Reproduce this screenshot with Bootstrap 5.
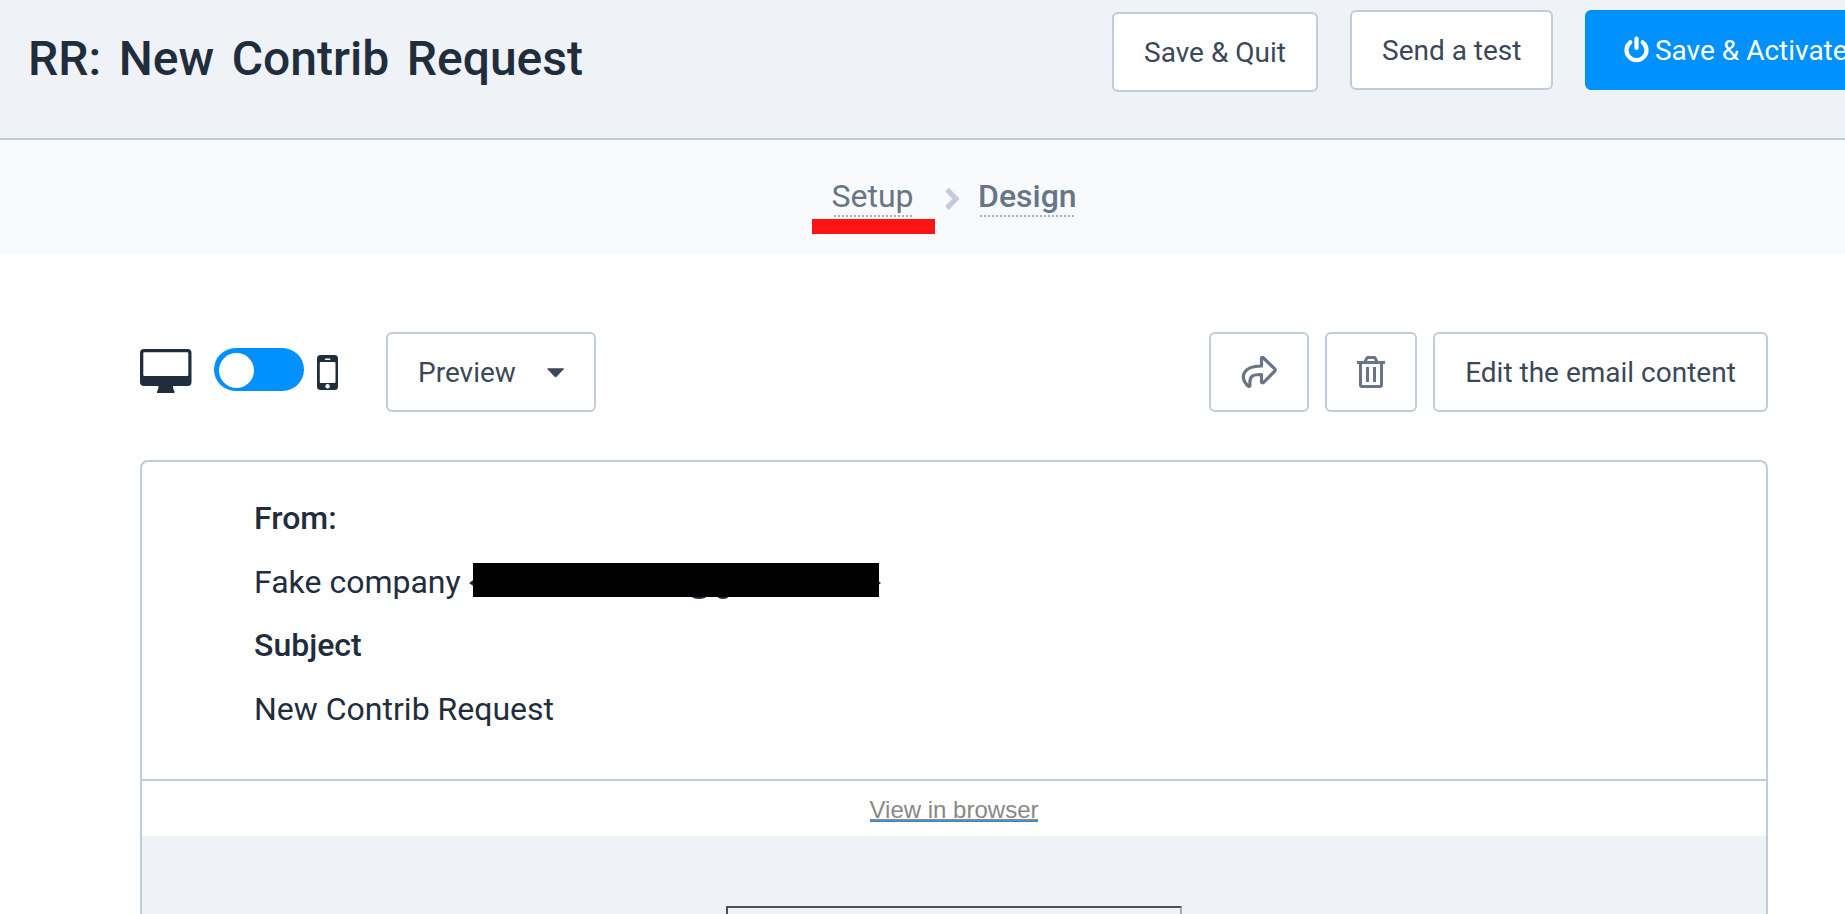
<!DOCTYPE html>
<html lang="en">
<head>
<meta charset="utf-8">
<title>RR: New Contrib Request</title>
<link href="https://cdn.jsdelivr.net/npm/bootstrap@5.3.0/dist/css/bootstrap.min.css" rel="stylesheet">
<style>
body{font-family:Roboto,"Liberation Sans",sans-serif;font-size:32px;color:#1f2d3d;height:914px;overflow:hidden;background:#fff}
.topbar{height:140px;background:#eff2f7;border-bottom:2px solid #c0ccda;overflow:hidden}
.topbar h1{font-size:48px;font-weight:500;line-height:56px;margin:31px 0 0 28px;word-spacing:5.7px;white-space:nowrap}
.top-actions{gap:32px;margin:10px 0 0;width:733px;flex:none}
.action{height:80px;padding:2px 30px 0;border:2px solid #c0ccda;border-radius:6px;background:#fff;color:#3c4858;font-size:28px;line-height:74px;white-space:nowrap;flex:none}
.action:hover{background:#fff;border-color:#c0ccda;color:#3c4858}
.action.activate{background:#0091ff;border-color:#0091ff;color:#fff;padding-left:37px}
.activate svg{vertical-align:-3px;margin-right:-1px}
.steps{height:114px;background:#f9fafc}
.steps a{color:#687586;text-decoration:none;line-height:44px;display:block;height:43px;position:relative}
.steps a::after{content:"";position:absolute;left:2px;right:1px;bottom:0;height:2px;background:repeating-linear-gradient(90deg,#a3b0c3 0 2px,transparent 2px 4px)}
.underscore{position:absolute;left:-20px;top:45px;width:123px;height:15px;background:#ff1414}
.toolbar-row{margin:78px 77px 0 140px;height:80px}
.toggle{width:90px;height:43px;border-radius:22px;background:#0091ff;padding:5px;margin-left:22px;margin-top:-5px}
.toggle span{display:block;width:35px;height:35px;border-radius:50%;background:#fff}
.mail{margin:48px 77px 0 140px;border:2px solid #c0ccda;border-bottom:0;border-radius:8px 8px 0 0;height:454px}
.mail-head{height:319px;border-bottom:2px solid #c0ccda;padding:25px 0 0 112px}
.mail-head p{margin:0;line-height:63.6px;height:63.6px;white-space:nowrap}
.view{height:55px;font:24px/30px "Liberation Sans",sans-serif;padding-top:14px}
.view a{color:#888;text-decoration:none;display:block;height:27px;border-bottom:1px solid #0091ff;box-shadow:inset 0 -2px #888}
.mail-body{background:#eff2f7;height:78px;padding-top:70px}
.frame{width:456px;height:8px;border:2px solid #505050;border-bottom:0;border-right-color:#aaa;background:#eff2f6}
.medium{font-weight:500}
#setup{margin:34px 0 0 832px;width:81px}
#setup>b{font-weight:400;margin-left:-.5px}
#chev{margin:47px 0 0 31px}
#design{margin:34px 0 0 18px;width:97px}
#quit{width:206px;margin-top:2px}
#send{width:203px}
#preview{width:210px}
#share{width:100px}
#trash{width:92px;margin:0 16px}
#edit{width:335px}
#redact{margin-left:8px;margin-top:-3px}
</style>
</head>
<body>
<header class="topbar d-flex justify-content-between align-items-start">
  <h1>RR: New Contrib Request</h1>
  <div class="top-actions d-flex align-items-start">
    <button class="btn action" id="quit">Save &amp; Quit</button>
    <button class="btn action" id="send">Send a test</button>
    <button class="btn action activate"><svg width="25" height="28" viewBox="0 0 25 28" fill="none" stroke="#fff" stroke-width="4.200" stroke-linecap="round"><path d="M12.500 3.500v9.500M6.300 7.300a10 10 0 1 0 12.400 0"/></svg> Save &amp; Activate</button>
  </div>
</header>
<nav class="steps d-flex">
  <a href="#" id="setup"><b>Setup</b><span class="underscore"></span></a>
  <svg id="chev" width="16" height="24" viewBox="0 0 16 24" fill="none" stroke="#c0ccda" stroke-width="5.200"><path d="M3 2.500l9 9.300-9 9.300"/></svg>
  <a href="#" id="design" class="medium">Design</a>
</nav>
<main>
  <div class="toolbar-row d-flex align-items-center">
    <svg width="52" height="45" viewBox="0 0 52 45" fill="#1f2d3d" style="margin-top:-2px"><path fill-rule="evenodd" d="M4 0h43.500a4 4 0 0 1 4 4v29a4 4 0 0 1-4 4H33c0 2 .6 4 1.500 5.500V44H17v-1.500c1-1.500 1.500-3.500 1.500-5.500H4a4 4 0 0 1-4-4V4a4 4 0 0 1 4-4zM4.300 3.300a1 1 0 0 0-1 1V26a1 1 0 0 0 1 1h43a1 1 0 0 0 1-1V4.300a1 1 0 0 0-1-1z"/></svg>
    <div class="toggle"><span></span></div>
    <svg width="21" height="35" viewBox="0 0 21 35" style="margin-left:13px;margin-top:1px"><rect width="21" height="35" rx="3.500" fill="#1f2d3d"/><rect x="2.800" y="7" width="15.700" height="21" rx="1" fill="#fff"/><rect x="7.800" y="3.600" width="5.600" height="1.400" rx=".7" fill="#fff"/><circle cx="10.600" cy="31.300" r="2.200" fill="#fff"/></svg>
    <button class="btn action d-flex align-items-center" id="preview" style="margin-left:48px">Preview<svg width="18" height="10" viewBox="0 0 18 10" fill="#3c4858" style="margin-left:31px"><path d="M1 0h16q1 .3.500 1.200L10 9q-1 .8-2 0L.5 1.200Q0 .3 1 0z"/></svg></button>
    <button class="btn action ms-auto" id="share"><svg width="36" height="32" viewBox="0 0 36 32" fill="none" stroke="#687586" stroke-width="3.200" stroke-linejoin="round" style="display:block;margin-top:-2px"><path d="M20.500 10V2q.5-1 1.500-.5L34 13.200q.5.800 0 1.600L22.500 26.500q-1.500.8-2-.5V18.500C12 18.300 8 20 9 29q-.2 2.300-2 1C-1 22 .5 10 20.500 10z"/></svg></button>
    <button class="btn action" id="trash"><svg width="28" height="32" viewBox="0 0 28 32" fill="none" stroke="#687586" stroke-width="3" style="display:block;margin-top:-2px"><path d="M0 6.500h28M8 6l1.800-3.800q.4-.7 1.200-.7h6q.8 0 1.200.7L20 6M3.500 7v22q0 1.500 1.500 1.500h18q1.500 0 1.500-1.500V7M10.500 11v15M17.500 11v15"/></svg></button>
    <button class="btn action" id="edit">Edit the email content</button>
  </div>
  <section class="mail">
    <div class="mail-head">
      <p class="medium">From:</p>
      <p class="d-flex align-items-center"><span>Fake company</span><svg id="redact" width="412" height="38" viewBox="469 562 412 38"><path d="M469 583l5-3.500v7zM881 583l-4-3v6z" fill="#1f2d3d"/><ellipse cx="699" cy="595.500" rx="8" ry="3.500" fill="#1f2d3d"/><ellipse cx="723" cy="595.500" rx="6" ry="3.500" fill="#1f2d3d"/><path d="M473 563h406v34H473z"/></svg></p>
      <p class="medium">Subject</p>
      <p>New Contrib Request</p>
    </div>
    <div class="view d-flex justify-content-center"><a href="#">View in browser</a></div>
    <div class="mail-body"><div class="frame mx-auto"></div></div>
  </section>
</main>
<script src="https://cdn.jsdelivr.net/npm/bootstrap@5.3.0/dist/js/bootstrap.bundle.min.js"></script>
</body>
</html>
